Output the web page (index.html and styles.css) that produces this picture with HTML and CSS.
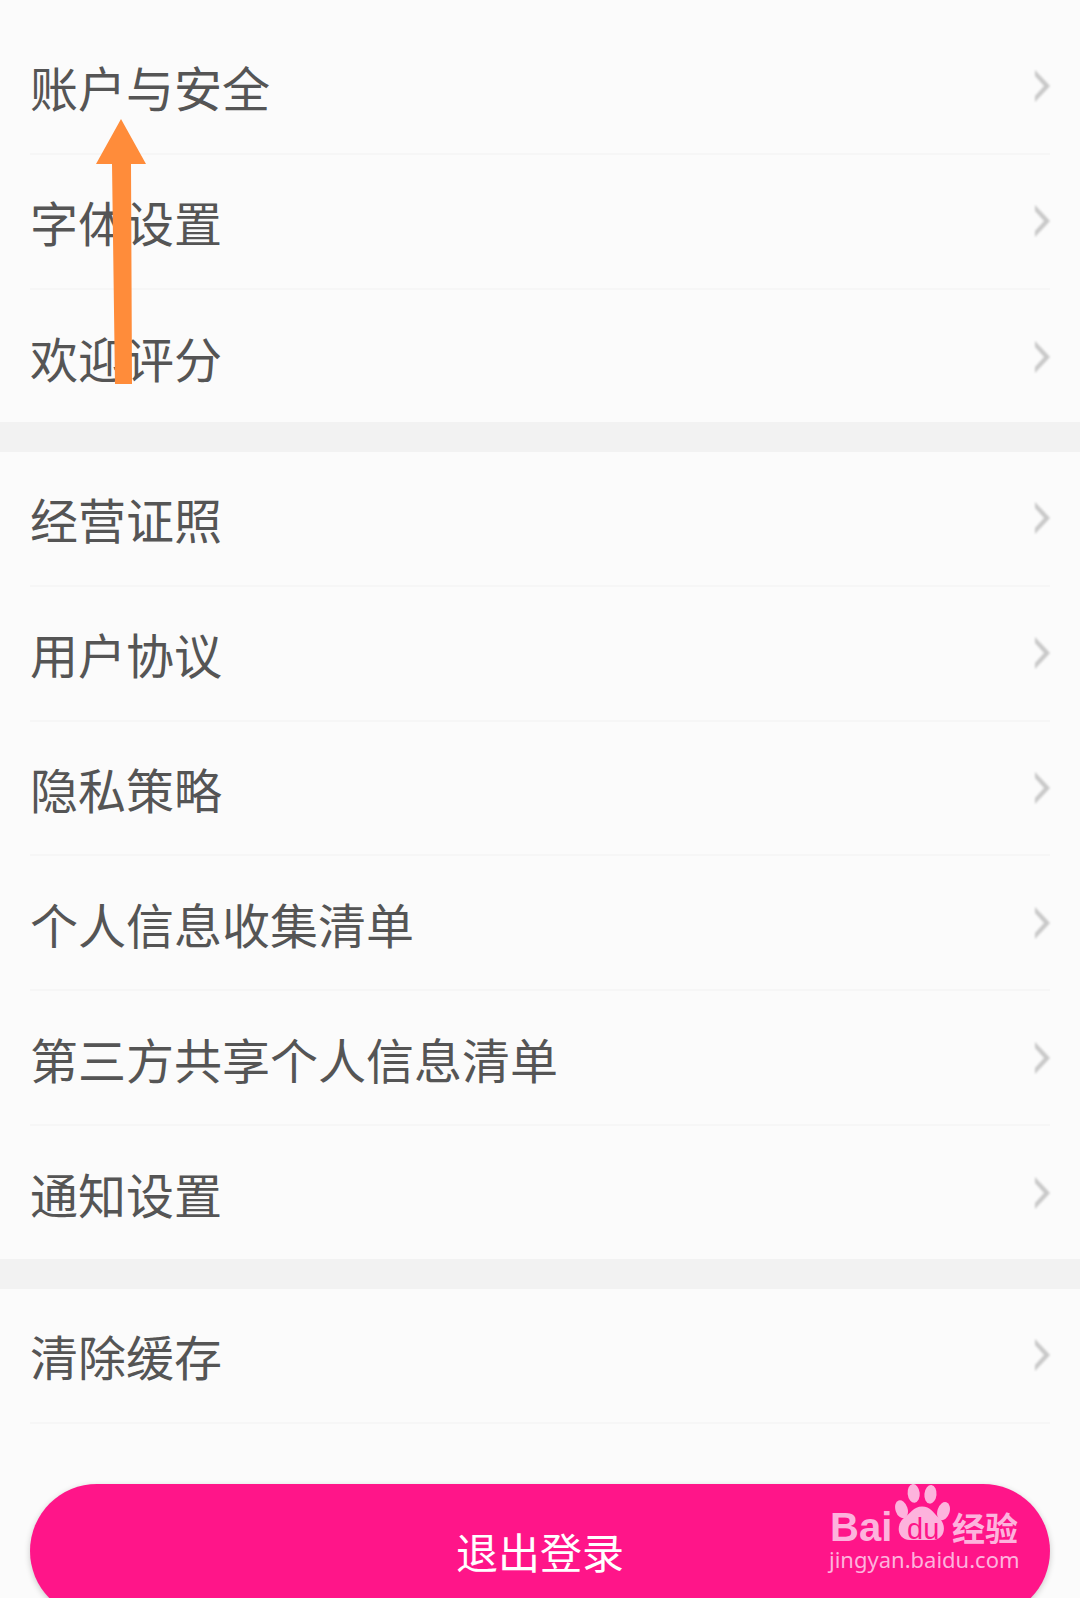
FILE: index.html
```html
<!DOCTYPE html>
<html lang="zh-CN">
<head>
  <meta charset="UTF-8">
  <meta name="viewport" content="width=device-width, initial-scale=1">
  <title>设置</title>
  <link rel="stylesheet" href="styles.css">
</head>
<body>
  <svg class="defs" width="0" height="0">
    <symbol id="chevron" viewBox="0 0 16 32">
      <polygon points="1,0 16,16 1,32 1,26 10,16 1,6" fill="#c8c8c8"/>
    </symbol>
  </svg>

  <div class="page">
    <section class="group group-first">
      <a class="row"><span>账户与安全</span><svg class="chevron"><use href="#chevron"/></svg></a>
      <a class="row"><span>字体设置</span><svg class="chevron"><use href="#chevron"/></svg></a>
      <a class="row"><span>欢迎评分</span><svg class="chevron"><use href="#chevron"/></svg></a>
    </section>

    <section class="group group-middle">
      <a class="row"><span>经营证照</span><svg class="chevron"><use href="#chevron"/></svg></a>
      <a class="row"><span>用户协议</span><svg class="chevron"><use href="#chevron"/></svg></a>
      <a class="row"><span>隐私策略</span><svg class="chevron"><use href="#chevron"/></svg></a>
      <a class="row"><span>个人信息收集清单</span><svg class="chevron"><use href="#chevron"/></svg></a>
      <a class="row"><span>第三方共享个人信息清单</span><svg class="chevron"><use href="#chevron"/></svg></a>
      <a class="row"><span>通知设置</span><svg class="chevron"><use href="#chevron"/></svg></a>
    </section>

    <section class="group group-last">
      <a class="row"><span>清除缓存</span><svg class="chevron"><use href="#chevron"/></svg></a>
    </section>

    <button class="logout" type="button">退出登录</button>

    <!-- annotation arrow drawn over the list -->
    <svg class="arrow" width="60" height="270" viewBox="0 0 60 270">
      <polygon points="25,0 50,45 35,45 36,265 19,265 16,45 0,45" fill="#ff8c3a"/>
    </svg>

    <!-- watermark -->
    <div class="watermark">
      <span class="wm-bai">Bai</span>
      <svg class="wm-paw" width="56" height="60" viewBox="0 0 60 62">
        <ellipse cx="7" cy="27" rx="6.5" ry="10" transform="rotate(-18 7 27)"/>
        <ellipse cx="20" cy="10" rx="6.5" ry="10" transform="rotate(-6 20 10)"/>
        <ellipse cx="38" cy="11" rx="6.5" ry="10" transform="rotate(6 38 11)"/>
        <ellipse cx="52" cy="29" rx="6.5" ry="10" transform="rotate(18 52 29)"/>
        <path d="M29 24 C38 24 41 31 47 36 C55 42 55 59 41 60 C34 60 24 60 16 60 C2 59 1 44 9 37 C16 32 20 24 29 24 Z"/>
      </svg>
      <span class="wm-du">du</span>
      <span class="wm-jy">经验</span>
      <span class="wm-url">jingyan.baidu.com</span>
    </div>
  </div>
</body>
</html>
```

FILE: styles.css
```css
* {
  box-sizing: border-box;
}

html, body {
  margin: 0;
  padding: 0;
}

body {
  background: #fbfbfb;
  font-family: "Noto Sans CJK SC", "Noto Sans", sans-serif;
}

.defs {
  position: absolute;
}

.page {
  position: relative;
  width: 1080px;
  height: 1598px;
  overflow: hidden;
  background: #fbfbfb;
}

.group-first {
  height: 422px;
  padding-top: 20px;
}

.group-middle {
  height: 837px;
  border-top: 30px solid #f2f2f2;
}

.group-last {
  border-top: 30px solid #f2f2f2;
}

.row {
  display: flex;
  align-items: center;
  justify-content: space-between;
  height: 134.8px;
  margin: 0 30px;
  border-bottom: 2px solid #f6f6f6;
  color: #555;
  font-size: 48px;
}

.group:not(.group-last) .row:last-child {
  border-bottom: 0;
}

.chevron {
  width: 16px;
  height: 32px;
  filter: blur(0.8px);
}

.logout {
  display: block;
  width: 1020px;
  height: 134px;
  margin: 60px 30px 0;
  border: 0;
  border-radius: 67px;
  background: #ff1589;
  box-shadow: 0 2px 6px rgba(0, 0, 0, 0.2);
  color: #fff;
  font-family: inherit;
  font-size: 42px;
}

.arrow {
  position: absolute;
  left: 96px;
  top: 119px;
}

.watermark {
  position: absolute;
  left: 0;
  top: 0;
  color: #fdb3dd;
}

.watermark span {
  position: absolute;
  white-space: nowrap;
}

.wm-bai {
  left: 830px;
  top: 1502px;
  font-family: "Liberation Sans", sans-serif;
  font-size: 40px;
  font-weight: 700;
  line-height: 50px;
}

.wm-paw {
  position: absolute;
  left: 895px;
  top: 1483px;
  fill: #fdb3dd;
}

.wm-du {
  left: 907px;
  top: 1512px;
  color: #ff1589;
  font-family: "Liberation Sans", sans-serif;
  font-size: 29px;
  font-weight: 400;
  line-height: 34px;
}

.wm-jy {
  left: 952px;
  top: 1505px;
  font-size: 33px;
  font-weight: 700;
  line-height: 44px;
}

.wm-url {
  left: 829px;
  top: 1544px;
  font-family: "Noto Sans", sans-serif;
  font-size: 22px;
  line-height: 30px;
}
```
